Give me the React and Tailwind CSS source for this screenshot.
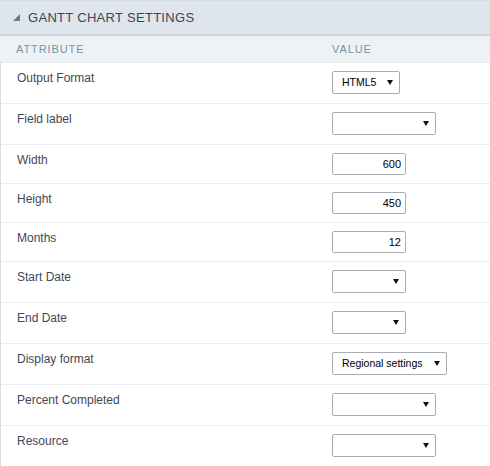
import React from 'react';

const rows = [
  { label: 'Output Format', kind: 'select', value: 'HTML5', width: 'w-[68px]' },
  { label: 'Field label', kind: 'select', value: '', width: 'w-[104px]' },
  { label: 'Width', kind: 'input', value: '600' },
  { label: 'Height', kind: 'input', value: '450' },
  { label: 'Months', kind: 'input', value: '12' },
  { label: 'Start Date', kind: 'select', value: '', width: 'w-[74px]' },
  { label: 'End Date', kind: 'select', value: '', width: 'w-[74px]' },
  { label: 'Display format', kind: 'select', value: 'Regional settings', width: 'w-[115px]' },
  { label: 'Percent Completed', kind: 'select', value: '', width: 'w-[104px]' },
  { label: 'Resource', kind: 'select', value: '', width: 'w-[104px]' },
];

function Arrow() {
  return (
    <svg width="6" height="5" viewBox="0 0 6 5" className="shrink-0">
      <path d="M0 0 H6 L3 5 Z" fill="#111" />
    </svg>
  );
}

function SelectBox({ value, width }) {
  return (
    <div
      className={`flex h-[23px] ${width} items-center justify-between whitespace-nowrap rounded-[2px] border border-[#a9adb5] bg-white pl-[9px] pr-[6px] text-[10.5px] text-black`}
    >
      <span>{value}</span>
      <Arrow />
    </div>
  );
}

function TextBox({ value }) {
  return (
    <div className="flex h-[22px] w-[74px] items-center justify-end rounded-[2px] border border-[#a9adb5] bg-white pr-[4px] text-[11px] text-black">
      {value}
    </div>
  );
}

export default function App() {
  return (
    <div className="h-[466px] w-[490px] overflow-hidden bg-white font-['Liberation_Sans',Arial,sans-serif]">
      <div className="flex h-[36px] items-center gap-[8px] border-t border-b-2 border-t-[#d4dce3] border-b-[#cfd8df] bg-[#dfe5ec] pl-[13px]">
        <svg width="7" height="7" viewBox="0 0 7 7">
          <path d="M7 0 V7 H0 Z" fill="#6f7a85" />
        </svg>
        <span className="text-[13px] tracking-[0.3px] text-[#3d4350]">GANTT CHART SETTINGS</span>
      </div>

      <div className="flex h-[26px] items-center bg-[#eef2f5] text-[11px] tracking-[0.9px] text-[#7394ab]">
        <div className="w-[332px] pl-[16px]">ATTRIBUTE</div>
        <div>VALUE</div>
      </div>

      <div className="border-l border-[#d3dee7]">
        {rows.map((row) => (
          <div key={row.label} className="flex border-t border-[#e9edf1]">
            <div className="w-[331px] pl-[16px] pt-[6px] text-[12px] leading-[18px] text-[#3f4856]">
              {row.label}
            </div>
            {row.kind === 'select' ? (
              <div className="pt-[8px] pb-[9px]">
                <SelectBox value={row.value} width={row.width} />
              </div>
            ) : (
              <div className="py-[8px]">
                <TextBox value={row.value} />
              </div>
            )}
          </div>
        ))}
      </div>
    </div>
  );
}
